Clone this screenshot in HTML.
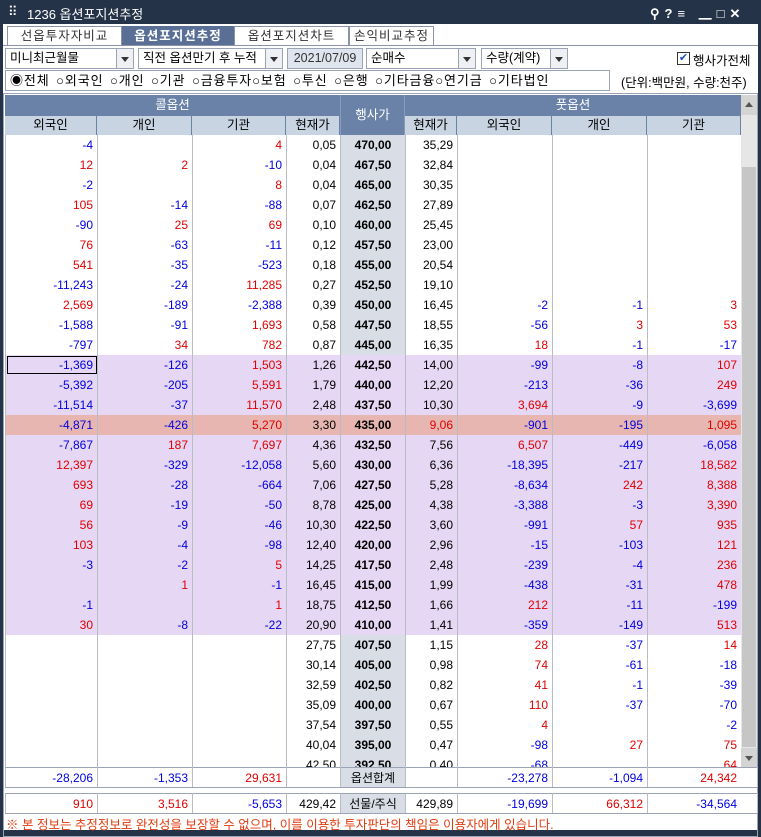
<!DOCTYPE html>
<html><head><meta charset="utf-8"><style>
*{margin:0;padding:0;box-sizing:border-box}
body{width:761px;height:833px;background:#253348;font-family:"Liberation Sans","Noto Sans CJK KR",sans-serif;font-size:12px;position:relative;overflow:hidden;color:#000}
.a{position:absolute}
#main{left:3px;top:24px;width:755px;height:806px;background:#fff}
.tab{top:2px;height:19px;border:1px solid #8a94a6;border-bottom:none;text-align:center;line-height:18px;font-size:12.5px;color:#333;background:#fff;letter-spacing:1px}
.tab.on{background:#5a6f96;color:#fff;font-weight:bold;border-color:#5a6f96}
.box{border:1px solid #9aa4b4;height:21px;line-height:19px;padding-left:4px;background:#fff;font-size:12.5px}
.dd{width:17px;height:19px;border-left:1px solid #9aa4b4;background:#eef0f4;top:0;right:0}
.dd:after{content:"";position:absolute;left:4px;top:8px;border-left:4px solid transparent;border-right:4px solid transparent;border-top:5px solid #333}
table{border-collapse:collapse;table-layout:fixed}
td{height:20px;padding:0 4px 0 0;text-align:right;border-left:1px solid #b8bcc4;border-right:1px solid #b8bcc4;white-space:nowrap;overflow:hidden;font-size:12px}
.b{color:#0000e0}.r{color:#e00000}
.s{background:#d8dde6;font-weight:bold;text-align:center;padding:0}
tr.p td{background:#e6d7f4}
tr.k td{background:#e8b6b0}
.hd{background:#6a82a8;color:#fff;text-align:center;font-size:12.5px}
.sh{background:#c8d4e2;text-align:center;font-size:12.5px;border-right:1px solid #6a82a8;top:21px;height:19px;line-height:19px}
.ft td{border-top:1px solid #9aa4b4;border-bottom:1px solid #9aa4b4}
</style></head><body>
<div class="a" style="left:8px;top:4px;color:#fff;font-size:13px">⠿</div>
<div class="a" style="left:27px;top:4px;color:#fff;font-size:13px">1236 옵션포지션추정</div>
<div class="a" style="left:650px;top:3px;color:#fff;font-size:13px;font-weight:bold;letter-spacing:5px">⚲?≡ ▁□✕</div>
<div class="a" id="main">
<div class="a" style="left:0;top:21px;width:755px;border-top:1px solid #8a94a6"></div>
<div class="a tab" style="left:4px;width:115px">선옵투자자비교</div>
<div class="a tab on" style="left:119px;width:112px">옵션포지션추정</div>
<div class="a tab" style="left:231px;width:115px">옵션포지션차트</div>
<div class="a tab" style="left:346px;width:85px">손익비교추정</div>

<div class="a box" style="left:2px;top:24px;width:129px">미니최근월물<div class="a dd"></div></div>
<div class="a box" style="left:135px;top:24px;width:145px">직전 옵션만기 후 누적<div class="a dd"></div></div>
<div class="a box" style="left:284px;top:24px;width:76px;background:#dfe5ee;color:#333;text-align:center;padding:0">2021/07/09</div>
<div class="a box" style="left:363px;top:24px;width:110px">순매수<div class="a dd"></div></div>
<div class="a box" style="left:478px;top:24px;width:87px">수량(계약)<div class="a dd"></div></div>
<div class="a" style="left:674px;top:28px;width:13px;height:13px;border:1px solid #333;color:#2050c0;font-size:11px;line-height:11px;text-align:center">✔</div>
<div class="a" style="left:690px;top:26px;font-size:12.5px">행사가전체</div>
<div class="a" style="left:2px;top:46px;width:605px;height:21px;border:1px solid #9aa4b4;font-size:13px;line-height:19px;padding-left:4px;white-space:nowrap;letter-spacing:0.9px;word-spacing:2px">◉전체 ○외국인 ○개인 ○기관 ○금융투자○보험 ○투신 ○은행 ○기타금융○연기금 ○기타법인</div>
<div class="a" style="left:618px;top:48px;font-size:12.5px">(단위:백만원, 수량:천주)</div>

<div class="a" style="left:0;top:69px;width:755px;height:744px;border:1px solid #9aa4b4"></div>
<div class="a" style="left:2px;top:71px;width:736px;height:40px">
 <div class="a hd" style="left:0;top:0;width:335px;height:21px;line-height:20px">콜옵션</div>
 <div class="a hd" style="left:335px;top:0;width:65px;height:40px;line-height:40px;border-left:1px solid #8a9ab8;border-right:1px solid #8a9ab8">행사가</div>
 <div class="a hd" style="left:400px;top:0;width:336px;height:21px;line-height:20px">풋옵션</div>
 <div class="a sh" style="left:0;width:92px">외국인</div>
 <div class="a sh" style="left:92px;width:95px">개인</div>
 <div class="a sh" style="left:187px;width:94px">기관</div>
 <div class="a sh" style="left:281px;width:54px">현재가</div>
 <div class="a sh" style="left:400px;width:52px">현재가</div>
 <div class="a sh" style="left:452px;width:95px">외국인</div>
 <div class="a sh" style="left:547px;width:95px">개인</div>
 <div class="a sh" style="left:642px;width:94px">기관</div>
</div>
<div class="a" style="left:738px;top:71px;width:16px;height:673px;background:#e6e6e6">
 <div class="a" style="left:0;top:0;width:16px;height:20px;background:#d4d4d4"></div>
 <div class="a" style="left:4px;top:7px;border-left:4px solid transparent;border-right:4px solid transparent;border-bottom:5px solid #555"></div>
 <div class="a" style="left:1px;top:72px;width:14px;height:580px;background:#c6c6c6"></div>
 <div class="a" style="left:0;top:653px;width:16px;height:20px;background:#d4d4d4"></div>
 <div class="a" style="left:4px;top:661px;border-left:4px solid transparent;border-right:4px solid transparent;border-top:5px solid #555"></div>
</div>
<div class="a" style="left:2px;top:111px;width:736px;height:633px;overflow:hidden">
<table style="width:736px">
<colgroup><col style="width:92px"><col style="width:95px"><col style="width:94px"><col style="width:54px"><col style="width:65px"><col style="width:52px"><col style="width:95px"><col style="width:95px"><col style="width:94px"></colgroup>
<tr><td class="b">-4</td><td></td><td class="r">4</td><td>0,05</td><td class="s">470,00</td><td>35,29</td><td></td><td></td><td></td></tr>
<tr><td class="r">12</td><td class="r">2</td><td class="b">-10</td><td>0,04</td><td class="s">467,50</td><td>32,84</td><td></td><td></td><td></td></tr>
<tr><td class="b">-2</td><td></td><td class="r">8</td><td>0,04</td><td class="s">465,00</td><td>30,35</td><td></td><td></td><td></td></tr>
<tr><td class="r">105</td><td class="b">-14</td><td class="b">-88</td><td>0,07</td><td class="s">462,50</td><td>27,89</td><td></td><td></td><td></td></tr>
<tr><td class="b">-90</td><td class="r">25</td><td class="r">69</td><td>0,10</td><td class="s">460,00</td><td>25,45</td><td></td><td></td><td></td></tr>
<tr><td class="r">76</td><td class="b">-63</td><td class="b">-11</td><td>0,12</td><td class="s">457,50</td><td>23,00</td><td></td><td></td><td></td></tr>
<tr><td class="r">541</td><td class="b">-35</td><td class="b">-523</td><td>0,18</td><td class="s">455,00</td><td>20,54</td><td></td><td></td><td></td></tr>
<tr><td class="b">-11,243</td><td class="b">-24</td><td class="r">11,285</td><td>0,27</td><td class="s">452,50</td><td>19,10</td><td></td><td></td><td></td></tr>
<tr><td class="r">2,569</td><td class="b">-189</td><td class="b">-2,388</td><td>0,39</td><td class="s">450,00</td><td>16,45</td><td class="b">-2</td><td class="b">-1</td><td class="r">3</td></tr>
<tr><td class="b">-1,588</td><td class="b">-91</td><td class="r">1,693</td><td>0,58</td><td class="s">447,50</td><td>18,55</td><td class="b">-56</td><td class="r">3</td><td class="r">53</td></tr>
<tr><td class="b">-797</td><td class="r">34</td><td class="r">782</td><td>0,87</td><td class="s">445,00</td><td>16,35</td><td class="r">18</td><td class="b">-1</td><td class="b">-17</td></tr>
<tr class="p"><td class="b" style="outline:1px solid #000;outline-offset:-2px">-1,369</td><td class="b">-126</td><td class="r">1,503</td><td>1,26</td><td class="s">442,50</td><td>14,00</td><td class="b">-99</td><td class="b">-8</td><td class="r">107</td></tr>
<tr class="p"><td class="b">-5,392</td><td class="b">-205</td><td class="r">5,591</td><td>1,79</td><td class="s">440,00</td><td>12,20</td><td class="b">-213</td><td class="b">-36</td><td class="r">249</td></tr>
<tr class="p"><td class="b">-11,514</td><td class="b">-37</td><td class="r">11,570</td><td>2,48</td><td class="s">437,50</td><td>10,30</td><td class="r">3,694</td><td class="b">-9</td><td class="b">-3,699</td></tr>
<tr class="k"><td class="b">-4,871</td><td class="b">-426</td><td class="r">5,270</td><td>3,30</td><td class="s">435,00</td><td class="r">9,06</td><td class="b">-901</td><td class="b">-195</td><td class="r">1,095</td></tr>
<tr class="p"><td class="b">-7,867</td><td class="r">187</td><td class="r">7,697</td><td>4,36</td><td class="s">432,50</td><td>7,56</td><td class="r">6,507</td><td class="b">-449</td><td class="b">-6,058</td></tr>
<tr class="p"><td class="r">12,397</td><td class="b">-329</td><td class="b">-12,058</td><td>5,60</td><td class="s">430,00</td><td>6,36</td><td class="b">-18,395</td><td class="b">-217</td><td class="r">18,582</td></tr>
<tr class="p"><td class="r">693</td><td class="b">-28</td><td class="b">-664</td><td>7,06</td><td class="s">427,50</td><td>5,28</td><td class="b">-8,634</td><td class="r">242</td><td class="r">8,388</td></tr>
<tr class="p"><td class="r">69</td><td class="b">-19</td><td class="b">-50</td><td>8,78</td><td class="s">425,00</td><td>4,38</td><td class="b">-3,388</td><td class="b">-3</td><td class="r">3,390</td></tr>
<tr class="p"><td class="r">56</td><td class="b">-9</td><td class="b">-46</td><td>10,30</td><td class="s">422,50</td><td>3,60</td><td class="b">-991</td><td class="r">57</td><td class="r">935</td></tr>
<tr class="p"><td class="r">103</td><td class="b">-4</td><td class="b">-98</td><td>12,40</td><td class="s">420,00</td><td>2,96</td><td class="b">-15</td><td class="b">-103</td><td class="r">121</td></tr>
<tr class="p"><td class="b">-3</td><td class="b">-2</td><td class="r">5</td><td>14,25</td><td class="s">417,50</td><td>2,48</td><td class="b">-239</td><td class="b">-4</td><td class="r">236</td></tr>
<tr class="p"><td></td><td class="r">1</td><td class="b">-1</td><td>16,45</td><td class="s">415,00</td><td>1,99</td><td class="b">-438</td><td class="b">-31</td><td class="r">478</td></tr>
<tr class="p"><td class="b">-1</td><td></td><td class="r">1</td><td>18,75</td><td class="s">412,50</td><td>1,66</td><td class="r">212</td><td class="b">-11</td><td class="b">-199</td></tr>
<tr class="p"><td class="r">30</td><td class="b">-8</td><td class="b">-22</td><td>20,90</td><td class="s">410,00</td><td>1,41</td><td class="b">-359</td><td class="b">-149</td><td class="r">513</td></tr>
<tr><td></td><td></td><td></td><td>27,75</td><td class="s">407,50</td><td>1,15</td><td class="r">28</td><td class="b">-37</td><td class="r">14</td></tr>
<tr><td></td><td></td><td></td><td>30,14</td><td class="s">405,00</td><td>0,98</td><td class="r">74</td><td class="b">-61</td><td class="b">-18</td></tr>
<tr><td></td><td></td><td></td><td>32,59</td><td class="s">402,50</td><td>0,82</td><td class="r">41</td><td class="b">-1</td><td class="b">-39</td></tr>
<tr><td></td><td></td><td></td><td>35,09</td><td class="s">400,00</td><td>0,67</td><td class="r">110</td><td class="b">-37</td><td class="b">-70</td></tr>
<tr><td></td><td></td><td></td><td>37,54</td><td class="s">397,50</td><td>0,55</td><td class="r">4</td><td></td><td class="b">-2</td></tr>
<tr><td></td><td></td><td></td><td>40,04</td><td class="s">395,00</td><td>0,47</td><td class="b">-98</td><td class="r">27</td><td class="r">75</td></tr>
<tr><td></td><td></td><td></td><td>42,50</td><td class="s">392,50</td><td>0,40</td><td class="b">-68</td><td></td><td class="r">64</td></tr>
</table></div>
<div class="a" style="left:2px;top:743px;width:752px">
<table class="ft" style="width:752px"><colgroup><col style="width:92px"><col style="width:95px"><col style="width:94px"><col style="width:54px"><col style="width:65px"><col style="width:52px"><col style="width:95px"><col style="width:95px"><col style="width:110px"></colgroup>
<tr><td class="b">-28,206</td><td class="b">-1,353</td><td class="r">29,631</td><td></td><td class="s" style="font-weight:normal">옵션합계</td><td></td><td class="b">-23,278</td><td class="b">-1,094</td><td class="r" style="padding-right:20px">24,342</td></tr></table></div>
<div class="a" style="left:2px;top:769px;width:752px">
<table class="ft" style="width:752px"><colgroup><col style="width:92px"><col style="width:95px"><col style="width:94px"><col style="width:54px"><col style="width:65px"><col style="width:52px"><col style="width:95px"><col style="width:95px"><col style="width:110px"></colgroup>
<tr><td class="r">910</td><td class="r">3,516</td><td class="b">-5,653</td><td>429,42</td><td class="s" style="font-weight:normal">선물/주식</td><td>429,89</td><td class="b">-19,699</td><td class="r">66,312</td><td class="b" style="padding-right:20px">-34,564</td></tr></table></div>
<div class="a" style="left:3px;top:790px;color:#e03c10;font-size:12.5px;white-space:nowrap">※ 본 정보는 추정정보로 완전성을 보장할 수 없으며, 이를 이용한 투자판단의 책임은 이용자에게 있습니다.</div>
</div>
</body></html>
